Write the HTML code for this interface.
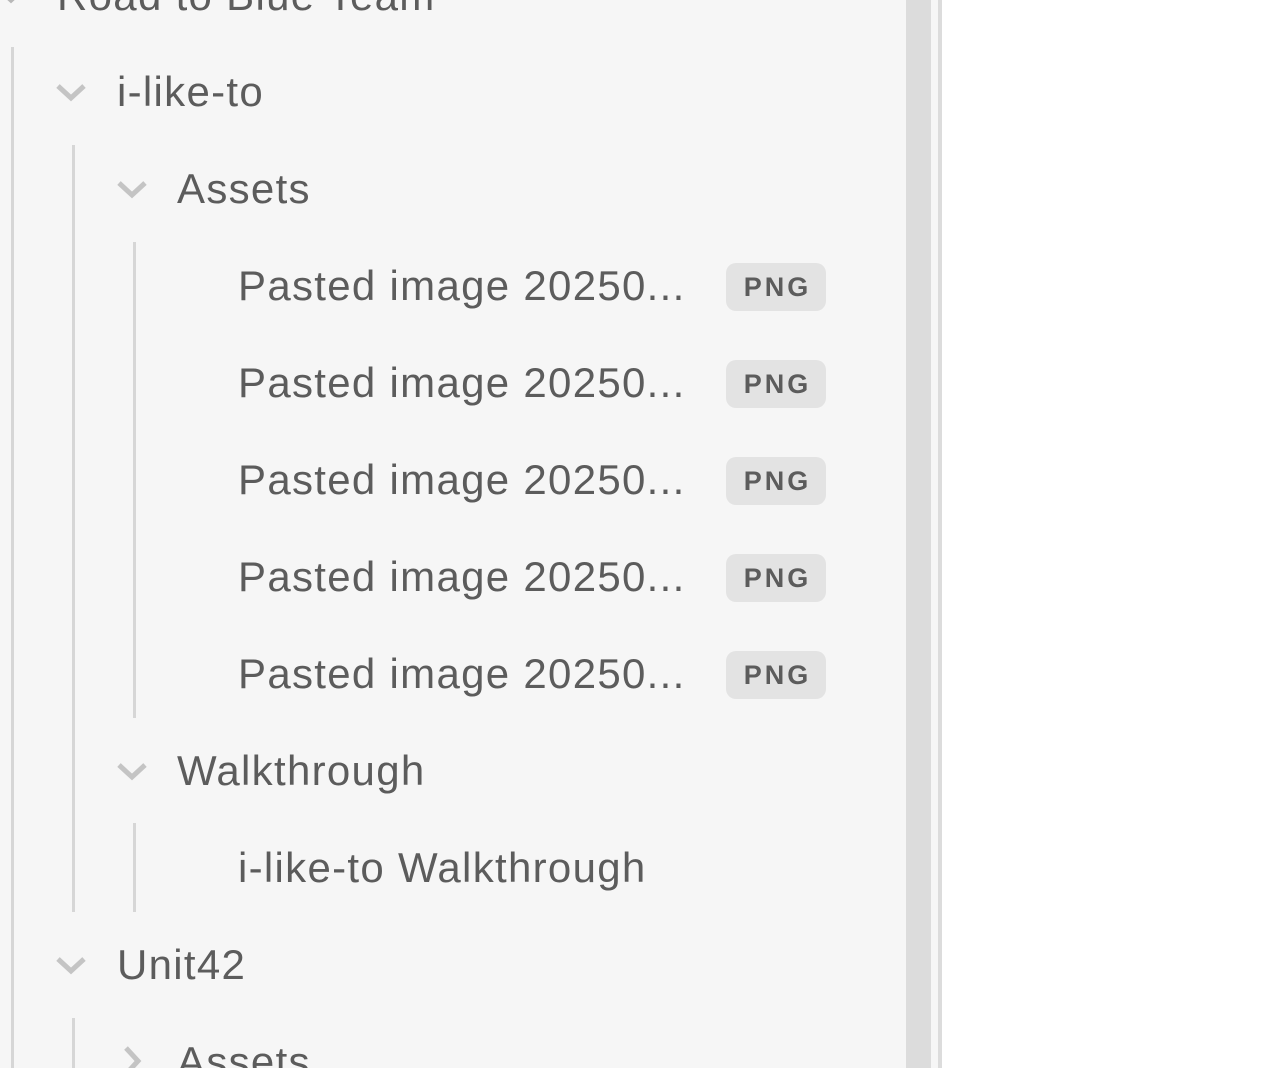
<!DOCTYPE html>
<html><head><meta charset="utf-8"><style>
html,body{margin:0;padding:0;width:1280px;height:1068px;overflow:hidden;background:#fff;}
.side{position:absolute;left:0;top:0;width:906px;height:1068px;background:#f6f6f6;overflow:hidden;}
.strip{position:absolute;left:906px;top:0;width:25px;height:1068px;background:#dcdcdc;}
.gap{position:absolute;left:931px;top:0;width:7px;height:1068px;background:#f6f6f6;}
.line{position:absolute;left:938px;top:0;width:4px;height:1068px;background:#dcdcdc;}
.t{position:absolute;font-family:"Liberation Sans",sans-serif;font-size:42px;letter-spacing:1.3px;color:#5c5c5c;line-height:50px;white-space:nowrap;}
.g{position:absolute;width:3px;background:#d6d6d6;}
.chev{position:absolute;width:34px;height:20px;}
.badge{position:absolute;left:726px;width:100px;height:48px;border-radius:10px;background:#e3e3e3;font-family:"Liberation Sans",sans-serif;font-weight:bold;font-size:27px;color:#5c5c5c;text-align:center;line-height:48px;letter-spacing:3px;text-indent:3px;}
</style></head><body>
<div class="side">
<div class="g" style="left:11px;top:47px;height:1021px"></div>
<div class="g" style="left:72px;top:145px;height:767px"></div>
<div class="g" style="left:133px;top:242px;height:476px"></div>
<div class="g" style="left:133px;top:823px;height:89px"></div>
<div class="g" style="left:72px;top:1018px;height:60px"></div>

<svg class="chev" style="left:-6px;top:-16px" viewBox="0 0 34 20"><path d="M4 4 L17 16 L30 4" fill="none" stroke="#b8b8b8" stroke-width="5"/></svg>
<div class="t" style="left:57px;top:-29px">Road to Blue Team</div>

<svg class="chev" style="left:54px;top:82px" viewBox="0 0 34 20"><path d="M4 4 L17 16 L30 4" fill="none" stroke="#c4c4c4" stroke-width="5"/></svg>
<div class="t" style="left:117px;top:67px">i-like-to</div>

<svg class="chev" style="left:115px;top:179px" viewBox="0 0 34 20"><path d="M4 4 L17 16 L30 4" fill="none" stroke="#c4c4c4" stroke-width="5"/></svg>
<div class="t" style="left:177px;top:164px">Assets</div>

<div class="t" style="left:238px;top:261px">Pasted image 20250...</div><div class="badge" style="top:263px">PNG</div>
<div class="t" style="left:238px;top:358px">Pasted image 20250...</div><div class="badge" style="top:360px">PNG</div>
<div class="t" style="left:238px;top:455px">Pasted image 20250...</div><div class="badge" style="top:457px">PNG</div>
<div class="t" style="left:238px;top:552px">Pasted image 20250...</div><div class="badge" style="top:554px">PNG</div>
<div class="t" style="left:238px;top:649px">Pasted image 20250...</div><div class="badge" style="top:651px">PNG</div>

<svg class="chev" style="left:115px;top:761px" viewBox="0 0 34 20"><path d="M4 4 L17 16 L30 4" fill="none" stroke="#c4c4c4" stroke-width="5"/></svg>
<div class="t" style="left:177px;top:746px">Walkthrough</div>
<div class="t" style="left:238px;top:843px">i-like-to Walkthrough</div>

<svg class="chev" style="left:54px;top:955px" viewBox="0 0 34 20"><path d="M4 4 L17 16 L30 4" fill="none" stroke="#c4c4c4" stroke-width="5"/></svg>
<div class="t" style="left:117px;top:940px">Unit42</div>

<svg style="position:absolute;left:122px;top:1044px;width:24px;height:34px" viewBox="0 0 24 34"><path d="M4 4 L16 17 L4 30" fill="none" stroke="#c4c4c4" stroke-width="5"/></svg>
<div class="t" style="left:177px;top:1037px">Assets</div>
</div>
<div class="strip"></div><div class="gap"></div><div class="line"></div>
</body></html>
